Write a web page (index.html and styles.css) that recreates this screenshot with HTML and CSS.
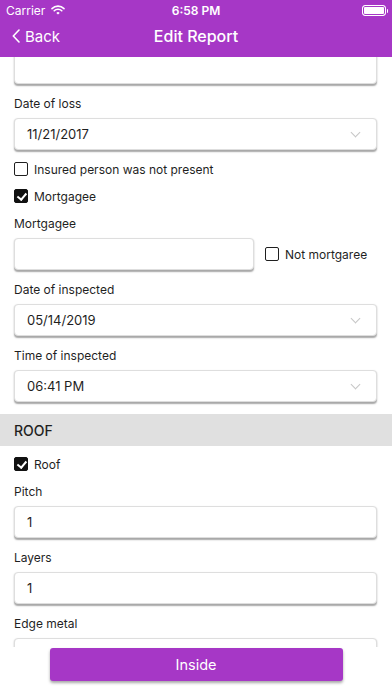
FILE: index.html
```html
<!DOCTYPE html>
<html lang="en">
<head>
    <meta charset="UTF-8">
    <meta name="viewport" content="width=device-width, initial-scale=1.0">
    <title>Edit Report</title>
    <link rel="stylesheet" href="styles.css">
</head>
<body>
    <div class="app">
        <header>
            <div class="status-bar">
                <div class="carrier">
                    Carrier
                    <svg width="14" height="10" viewBox="0 0 14 10">
                        <path d="M1 3.6 A8.5 8.5 0 0 1 13 3.6" fill="none" stroke="#fff" stroke-width="1.6" stroke-linecap="round"/>
                        <path d="M3.2 5.8 A5.4 5.4 0 0 1 10.8 5.8" fill="none" stroke="#fff" stroke-width="1.6" stroke-linecap="round"/>
                        <path d="M5.3 7.9 L7 9.6 L8.7 7.9 A2.4 2.4 0 0 0 5.3 7.9 Z" fill="#fff"/>
                    </svg>
                </div>
                <div class="time">6:58 PM</div>
                <div class="battery"><span></span></div>
            </div>
            <nav class="nav-bar">
                <a class="back" href="#">
                    <svg width="8" height="14" viewBox="0 0 8 14">
                        <path d="M7 1 L1.3 7 L7 13" fill="none" stroke="#fff" stroke-width="1.6" stroke-linecap="round" stroke-linejoin="round"/>
                    </svg>
                    Back
                </a>
                <h1>Edit Report</h1>
            </nav>
        </header>

        <div class="content">
            <div class="form">
                <div class="input"></div>

                <div class="field">
                    <label>Date of loss</label>
                    <div class="input select">11/21/2017</div>
                </div>

                <div class="check"><span class="box"></span>Insured person was not present</div>
                <div class="check"><span class="box checked"></span>Mortgagee</div>

                <div class="field">
                    <label>Mortgagee</label>
                    <div class="inline-row">
                        <div class="input short"></div>
                        <div class="check"><span class="box"></span>Not mortgaree</div>
                    </div>
                </div>

                <div class="field">
                    <label>Date of inspected</label>
                    <div class="input select">05/14/2019</div>
                </div>

                <div class="field">
                    <label>Time of inspected</label>
                    <div class="input select">06:41 PM</div>
                </div>

                <div class="section-title">ROOF</div>

                <div class="check"><span class="box checked"></span>Roof</div>

                <div class="field">
                    <label>Pitch</label>
                    <div class="input">1</div>
                </div>

                <div class="field">
                    <label>Layers</label>
                    <div class="input">1</div>
                </div>

                <div class="field">
                    <label>Edge metal</label>
                    <div class="input"></div>
                </div>
            </div>
        </div>

        <footer>
            <button class="inside-button">Inside</button>
        </footer>
    </div>
</body>
</html>
```

FILE: styles.css
```css
body {
    margin: 0;
    padding: 0;
    font-family: Inter, "Noto Sans", Arial, sans-serif;
    color: #1f1f1f;
    background-color: #fff;
}

.app {
    width: 392px;
    height: 696px;
    display: flex;
    flex-direction: column;
    overflow: hidden;
}

header {
    background-color: #a637c6;
    color: #fff;
    height: 57px;
    flex-shrink: 0;
}

.status-bar {
    height: 20px;
    display: flex;
    align-items: center;
    justify-content: space-between;
    padding: 0 6px;
    font-size: 12px;
}

.carrier {
    display: flex;
    align-items: center;
    gap: 6px;
    width: 80px;
}

.time {
    font-weight: 600;
}

.battery {
    width: 80px;
    display: flex;
    justify-content: flex-end;
}

.battery span {
    width: 22px;
    height: 9px;
    border: 1px solid #fff;
    border-radius: 3px;
    background-color: #fff;
    box-shadow: inset 0 0 0 1px #a637c6;
    position: relative;
}

.battery span::after {
    content: "";
    position: absolute;
    right: -3px;
    top: 3px;
    width: 1.5px;
    height: 4px;
    background-color: #fff;
    border-radius: 0 1px 1px 0;
}

.nav-bar {
    height: 32px;
    display: flex;
    align-items: center;
    position: relative;
    padding: 0 12px;
}

.back {
    display: flex;
    align-items: center;
    gap: 5px;
    color: #fff;
    text-decoration: none;
    font-size: 15px;
}

.nav-bar h1 {
    position: absolute;
    left: 0;
    right: 0;
    margin: 0;
    text-align: center;
    font-size: 16px;
    font-weight: 500;
    pointer-events: none;
}

.content {
    flex: 1;
    overflow: hidden;
}

.form {
    display: flex;
    flex-direction: column;
    gap: 11px;
    padding: 0 15px 0 14px;
    margin-top: -5px;
}

.field {
    display: flex;
    flex-direction: column;
    gap: 7px;
}

.field label {
    font-size: 12px;
    line-height: 16px;
    padding-top: 1px;
    margin-bottom: -1px;
}

.input {
    height: 32px;
    box-sizing: border-box;
    border: 1px solid #dedede;
    border-radius: 4px;
    box-shadow: 0 1.5px 1.5px rgba(0, 0, 0, 0.35);
    background-color: #fff;
    padding: 0 12px;
    font-size: 13px;
    display: flex;
    align-items: center;
    flex-shrink: 0;
}

.select {
    position: relative;
}

.select::after {
    content: "";
    position: absolute;
    right: 17px;
    top: 10px;
    width: 6px;
    height: 6px;
    border-right: 1.5px solid #c6c6c6;
    border-bottom: 1.5px solid #c6c6c6;
    transform: rotate(45deg);
}

.inline-row {
    display: flex;
    align-items: center;
    gap: 11px;
}

.input.short {
    width: 240px;
}

.check {
    display: flex;
    align-items: center;
    gap: 6px;
    height: 16px;
    font-size: 12px;
}

.box {
    width: 14px;
    height: 14px;
    box-sizing: border-box;
    border: 1.5px solid #1f1f1f;
    border-radius: 2px;
    flex-shrink: 0;
    position: relative;
}

.box.checked {
    background-color: #111;
    border-color: #111;
}

.box.checked::after {
    content: "";
    position: absolute;
    left: 3.5px;
    top: 0.5px;
    width: 3.5px;
    height: 7px;
    border-right: 2px solid #fff;
    border-bottom: 2px solid #fff;
    transform: rotate(40deg);
}

.section-title {
    background-color: #e0e0e0;
    margin: 1px -15px -1px -14px;
    height: 32px;
    padding-left: 14px;
    display: flex;
    align-items: center;
    font-size: 14px;
    font-weight: 500;
}

footer {
    height: 49px;
    flex-shrink: 0;
    background-color: #fff;
    display: flex;
    justify-content: center;
    padding-top: 1px;
    box-sizing: border-box;
}

.inside-button {
    width: 293px;
    height: 33px;
    background-color: #a637c6;
    color: #fff;
    border: none;
    border-radius: 3px;
    font-family: Inter, "Noto Sans", Arial, sans-serif;
    font-size: 14.5px;
    box-shadow: 0 2px 3px rgba(0, 0, 0, 0.35);
    cursor: pointer;
}
```
